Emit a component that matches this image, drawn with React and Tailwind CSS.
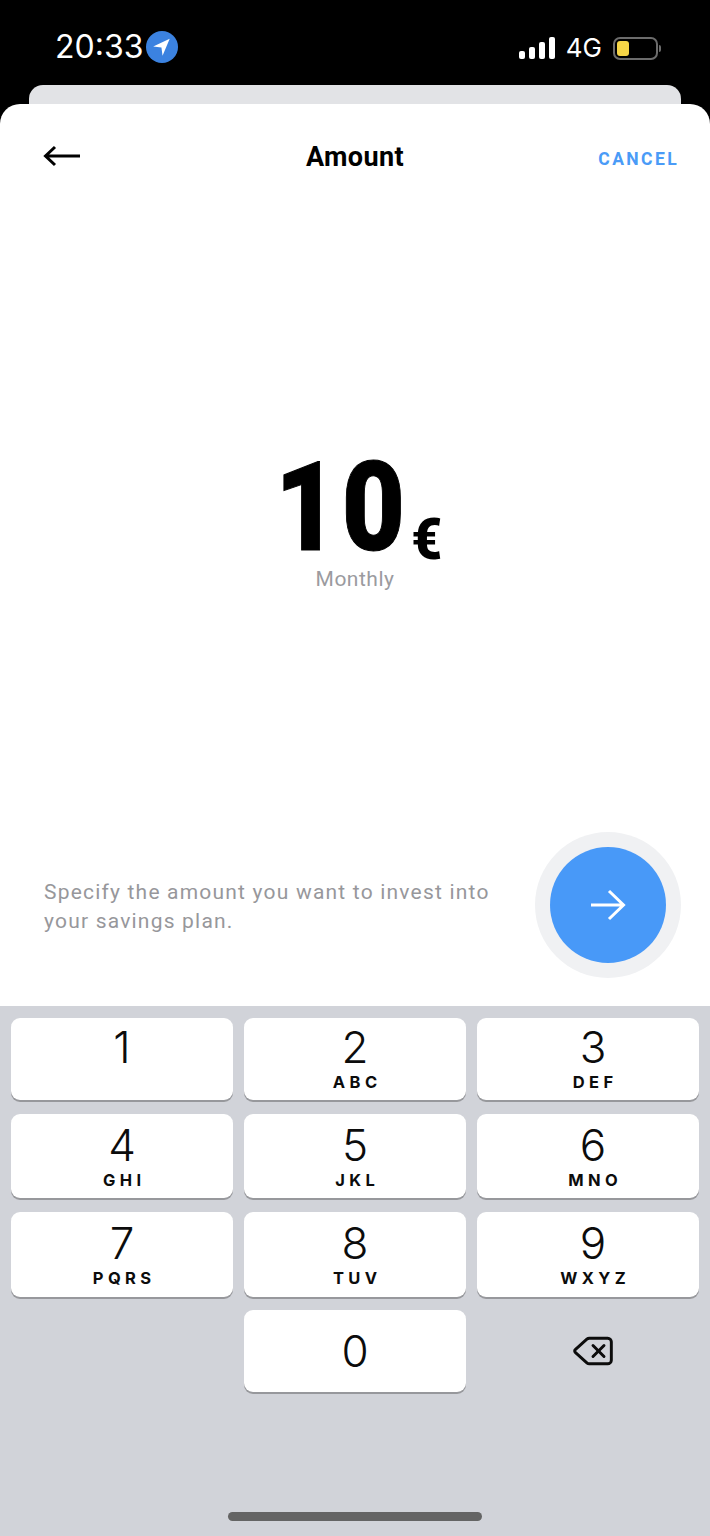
import { Delete } from "lucide-react";

const rows = [
  { size: "h-[96px] pb-[14px]", pad: "pt-[5px]", keys: [["1", ""], ["2", "ABC"], ["3", "DEF"]] },
  { size: "h-[98px] pb-[14px]", pad: "pt-[7px]", keys: [["4", "GHI"], ["5", "JKL"], ["6", "MNO"]] },
  { size: "h-[98px] pb-[13px]", pad: "pt-[7px]", keys: [["7", "PQRS"], ["8", "TUV"], ["9", "WXYZ"]] },
];

const Key = ({ digit, letters, pad, shift }) => (
  <div className={`flex-1 h-full bg-white rounded-[9px] shadow-[0_2px_0_#97989c] flex flex-col items-center ${pad}`}>
    <div className={`flex flex-col items-center ${shift ? "ml-[10px]" : ""}`}>
      <span className="text-[44px] leading-[48px] font-light text-[#0c0c0c]">{digit}</span>
      {letters && <span className="text-[16.5px] leading-[20px] font-bold tracking-[4.4px] mr-[-4.4px] text-[#0c0c0c] mt-[1px]">{letters}</span>}
    </div>
  </div>
);

const StatusBar = () => (
  <div className="h-[85px] shrink-0 bg-black flex items-start justify-between pt-[30px] pl-[55px] pr-[49px] text-white font-['Inter',sans-serif]">
    <div className="flex items-center gap-[3px]">
      <span className="text-[32px] leading-[34px] font-normal">20:33</span>
      <div className="w-[32px] h-[32px] rounded-full bg-[#3b82e0] flex items-center justify-center">
        <svg width="22" height="22" viewBox="0 0 20 20"><path d="M17 2.5 2 9.5 9.5 10.5 10.5 18Z" fill="white" /></svg>
      </div>
    </div>
    <div className="flex items-center gap-[11px] mt-[5px]">
      <div className="flex items-end gap-[4px] h-[23px] pb-[1px]">
        <div className="w-[6px] h-[8px] bg-white rounded-[2px]" />
        <div className="w-[6px] h-[12px] bg-white rounded-[2px]" />
        <div className="w-[6px] h-[17px] bg-white rounded-[2px]" />
        <div className="w-[6px] h-[22px] bg-white rounded-[2px]" />
      </div>
      <span className="text-[26px] leading-[26px] font-normal">4G</span>
      <div className="flex items-center gap-[1px]">
        <div className="w-[45px] h-[23px] rounded-[7px] border-2 border-[#6c6c6c] px-[2px] py-[2px]">
          <div className="w-[12px] h-full bg-[#f5d547] rounded-[3px]" />
        </div>
        <div className="w-[2px] h-[7px] bg-[#6c6c6c] rounded-r-[2px]" />
      </div>
    </div>
  </div>
);

export default function App() {
  return (
    <div className="w-[710px] h-[1536px] flex flex-col bg-black overflow-hidden font-['Roboto',sans-serif]">
      <StatusBar />
      <div className="h-[19px] shrink-0 mx-[29px] rounded-t-[14px] bg-[#e2e3e6]" />

      <div className="h-[902px] shrink-0 bg-white rounded-t-[20px] flex flex-col">
        <div className="flex items-center justify-between h-[104px] pl-[43px] pr-[31px] relative">
          <svg width="38" height="22" viewBox="0 0 38 22" fill="none" stroke="black" strokeWidth="3">
            <path d="M37 11H3M12 2 2.5 11 12 20" />
          </svg>
          <span className="absolute left-0 right-0 text-center text-[27px] leading-[32px] mt-[2px] font-bold tracking-[0.4px] text-black">Amount</span>
          <span className="text-[17.5px] leading-[24px] font-bold tracking-[2.4px] text-[#4a9bf7] mt-[6px]">CANCEL</span>
        </div>

        <div className="flex flex-col items-center mt-[243px]">
          <div className="flex items-end justify-center h-[114px]">
            <span className="text-[124px] leading-[114px] font-black text-black tracking-[4px] scale-x-[.88] [-webkit-text-stroke:1px_black]">10</span>
            <span className="text-[58px] leading-[52px] font-black text-black scale-x-[.92] ml-[-8px]">€</span>
          </div>
          <span className="text-[21px] leading-[28px] tracking-[0.5px] text-[#9b9b9f]">Monthly</span>
        </div>

        <div className="mt-auto flex items-center justify-between pl-[44px] pr-[29px] pb-[43px]">
          <p className="text-[21px] leading-[29px] tracking-[1.2px] text-[#97979b] w-[460px] mt-[4px]">
            Specify the amount you want to invest into your savings plan.
          </p>
          <div className="w-[116px] h-[116px] rounded-full bg-[#4899f8] ring-[15px] ring-[#f0f1f3] flex items-center justify-center mr-[15px]">
            <svg width="36" height="32" viewBox="0 0 36 32" fill="none" stroke="white" strokeWidth="3">
              <path d="M1 16H33M19 2 33.5 16 19 30" />
            </svg>
          </div>
        </div>
      </div>

      <div className="flex-1 bg-[#d1d3d9] flex flex-col px-[11px] pt-[12px] font-['Inter',sans-serif]">
        {rows.map(row => (
          <div key={row.pad + row.size} className={`flex gap-[11px] ${row.size}`}>
            {row.keys.map(([digit, letters], i) => (
              <Key key={digit} digit={digit} letters={letters} pad={row.pad} shift={i === 2} />
            ))}
          </div>
        ))}
        <div className="flex gap-[11px] h-[82px]">
          <div className="flex-1" />
          <Key digit="0" letters="" pad="pt-[17px]" />
          <div className="flex-1 flex items-center justify-center">
            <Delete size={44} strokeWidth={1.6} className="text-[#0c0c0c] ml-[10px]" />
          </div>
        </div>
        <div className="mt-auto mb-[15px] self-center w-[254px] h-[9px] rounded-full bg-[#646464]" />
      </div>
    </div>
  );
}
